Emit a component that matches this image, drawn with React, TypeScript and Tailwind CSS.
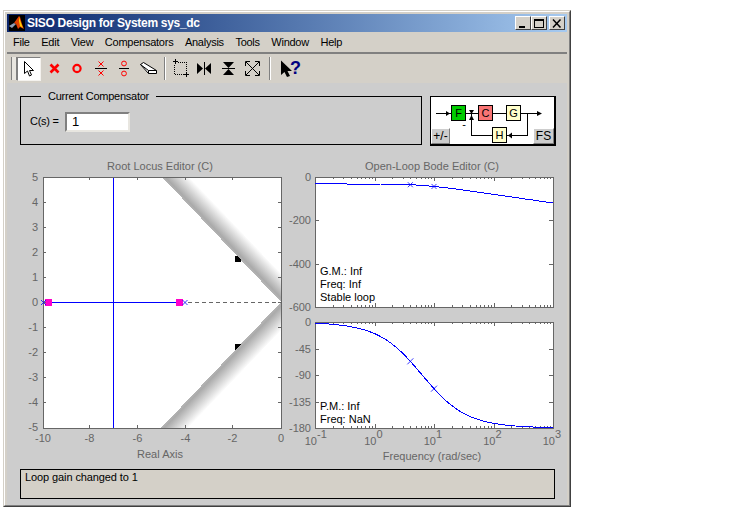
import { ReactNode } from 'react'

const MENU = ['File', 'Edit', 'View', 'Compensators', 'Analysis', 'Tools', 'Window', 'Help']
const AXIS = '#666666'
const TICK_TEXT = 'fill-[#666666] text-[11px]'

// bode data for 1/((s+4)(s+10))
const logX = (w: number) => 315 + (Math.log10(w) + 1) * 59.5
const magY = (w: number) => {
    const db = -20 * Math.log10(Math.sqrt(16 + w * w) * Math.sqrt(100 + w * w))
    return 177 + (-db / 600) * 130
}
const phaseY = (w: number) => {
    const deg = ((Math.atan(w / 4) + Math.atan(w / 10)) * 180) / Math.PI
    return 322 + (deg / 180) * 106
}
const curve = (fn: (w: number) => number) => {
    const pts: string[] = []
    for (let i = 0; i <= 120; i++) {
        const w = Math.pow(10, -1 + (i / 120) * 4)
        pts.push(`${logX(w).toFixed(1)},${fn(w).toFixed(1)}`)
    }
    return pts.join(' ')
}
const minorTicks = () => {
    const out: { x: number; major: boolean }[] = []
    for (let d = -1; d < 3; d++) {
        for (let m = 1; m < 10; m++) {
            out.push({ x: Math.round(logX(m * Math.pow(10, d))) + 0.5, major: m === 1 })
        }
    }
    return out
}

function Cross({ x, y, r = 3 }: { x: number; y: number; r?: number }) {
    return <path d={`M${x - r} ${y - r}L${x + r} ${y + r}M${x + r} ${y - r}L${x - r} ${y + r}`} stroke="#0000ff" strokeWidth="0.8" fill="none" />
}

function RootLocus() {
    const xTicks: [number, string][] = [[43, '-10'], [89.5, '-8'], [137.5, '-6'], [185.5, '-4'], [232.5, '-2'], [281, '0']]
    const yTicks = [5, 4, 3, 2, 1, 0, -1, -2, -3, -4, -5]
    return (
        <svg width="270" height="302" viewBox="20 160 270 302" className="shrink-0 overflow-visible">
            <defs>
                <linearGradient id="upperBand" gradientUnits="userSpaceOnUse" x1="162" y1="177" x2="176.100" y2="163.500">
                    <stop offset="0" stopColor="#b4b4b4" />
                    <stop offset="0.12" stopColor="#aaaaaa" />
                    <stop offset="1" stopColor="#ffffff" />
                </linearGradient>
                <linearGradient id="lowerBand" gradientUnits="userSpaceOnUse" x1="161" y1="428" x2="175.100" y2="441.500">
                    <stop offset="0" stopColor="#b4b4b4" />
                    <stop offset="0.12" stopColor="#aaaaaa" />
                    <stop offset="1" stopColor="#ffffff" />
                </linearGradient>
            </defs>
            <text x="160" y="170" textAnchor="middle" className={TICK_TEXT}>Root Locus Editor (C)</text>
            <rect x="43" y="177" width="238" height="251" fill="#ffffff" />
            <rect x="235" y="256" width="6" height="6" fill="#000000" />
            <rect x="235" y="344" width="6" height="6" fill="#000000" />
            <polygon points="162,177 189,177 281,274 281,302" fill="url(#upperBand)" shapeRendering="crispEdges" />
            <polygon points="161,428 188,428 281,330 281,302" fill="url(#lowerBand)" shapeRendering="crispEdges" />
            <g shapeRendering="crispEdges">
                <path d="M188 302.500H281M281.500 274V330" stroke={AXIS} strokeDasharray="4 3" fill="none" />
                <path d="M113.500 177V428M43 302.500H180" stroke="#0000ff" fill="none" />
                <rect x="45" y="299" width="7" height="7" fill="#ff00cc" />
                <rect x="176" y="299" width="7" height="7" fill="#ff00cc" />
                <rect x="43.500" y="177.500" width="238" height="251" fill="none" stroke={AXIS} />
                {xTicks.slice(1, 5).map(([x]) => (
                    <path key={x} d={`M${Math.floor(x) + 0.5} 177V180M${Math.floor(x) + 0.5} 428V425`} stroke={AXIS} />
                ))}
                {yTicks.slice(1, 10).map(v => (
                    <path key={v} d={`M43 ${302.5 - v * 25}H46M281 ${302.5 - v * 25}H278`} stroke={AXIS} />
                ))}
            </g>
            <Cross x={43.5} y={302.5} r={2.5} />
            <Cross x={185} y={302.5} r={2.5} />
            {yTicks.map(v => (
                <text key={v} x="38" y={306 - v * 25} textAnchor="end" className={TICK_TEXT}>{v}</text>
            ))}
            {xTicks.map(([x, label]) => (
                <text key={label} x={x} y="442" textAnchor="middle" className={TICK_TEXT}>{label}</text>
            ))}
            <text x="160" y="458" textAnchor="middle" className={TICK_TEXT}>Real Axis</text>
        </svg>
    )
}

function BodeAxes({ top, bottom, yTicks }: { top: number; bottom: number; yTicks: string[] }) {
    const step = (bottom - top) / (yTicks.length - 1)
    return (
        <>
            <g shapeRendering="crispEdges">
                <rect x="315.500" y={top + 0.5} width="238" height={bottom - top} fill="none" stroke={AXIS} />
                {minorTicks().map(t => (
                    <path key={t.x} d={`M${t.x} ${top}v${t.major ? 4 : 2}M${t.x} ${bottom}v-${t.major ? 4 : 2}`} stroke={AXIS} />
                ))}
                {yTicks.slice(1, -1).map((_, i) => {
                    const y = Math.round(top + step * (i + 1)) + 0.5
                    return <path key={i} d={`M315 ${y}h4M553 ${y}h-4`} stroke={AXIS} />
                })}
            </g>
            {yTicks.map((label, i) => (
                <text key={label} x="311" y={top + step * i + 4} textAnchor="end" className={TICK_TEXT}>{label}</text>
            ))}
        </>
    )
}

function BodePlots() {
    const decades: [number, string][] = [[315, '-1'], [374.5, '0'], [434, '1'], [493.5, '2'], [553, '3']]
    return (
        <svg width="277" height="302" viewBox="290 160 277 302" className="shrink-0 overflow-visible">
            <text x="432" y="170" textAnchor="middle" className={TICK_TEXT}>Open-Loop Bode Editor (C)</text>
            <rect x="315" y="177" width="238" height="130" fill="#ffffff" />
            <rect x="315" y="322" width="238" height="106" fill="#ffffff" />
            <BodeAxes top={177} bottom={307} yTicks={['0', '-200', '-400', '-600']} />
            <BodeAxes top={322} bottom={428} yTicks={['0', '-45', '-90', '-135', '-180']} />
            <polyline points={curve(magY)} fill="none" stroke="#0000ff" shapeRendering="crispEdges" />
            <polyline points={curve(phaseY)} fill="none" stroke="#0000ff" shapeRendering="crispEdges" />
            <Cross x={logX(4)} y={magY(4)} r={2.5} />
            <Cross x={logX(10)} y={magY(10)} r={2.5} />
            <Cross x={logX(4)} y={phaseY(4)} />
            <Cross x={logX(10)} y={phaseY(10)} />
            <g className="fill-black text-[11px]">
                <text x="320" y="275">G.M.: Inf</text>
                <text x="320" y="288">Freq: Inf</text>
                <text x="320" y="301">Stable loop</text>
                <text x="320" y="410">P.M.: Inf</text>
                <text x="320" y="423">Freq: NaN</text>
            </g>
            {decades.map(([x, exp]) => (
                <g key={exp} className={TICK_TEXT}>
                    <text x={x + 2} y="445" textAnchor="end">10</text>
                    <text x={x + 2} y="438">{exp}</text>
                </g>
            ))}
            <text x="432" y="460" textAnchor="middle" className={TICK_TEXT}>Frequency (rad/sec)</text>
        </svg>
    )
}

function Block({ x, y, fill, label }: { x: number; y: number; fill: string; label: string }) {
    return (
        <g>
            <rect x={x + 0.5} y={y + 0.5} width="14" height="15" fill={fill} stroke="#000000" shapeRendering="crispEdges" />
            <text x={x + 7.5} y={y + 12} textAnchor="middle" className="fill-black text-[11px]">{label}</text>
        </g>
    )
}

function LoopDiagram() {
    return (
        <div className="relative w-[126px] h-[50px] bg-white border border-black border-r-2 border-b-2 shrink-0">
            <svg width="124" height="48" viewBox="431 97 124 48" className="block">
                <g shapeRendering="crispEdges">
                    <path d="M436 113.500H451M465 113.500H478M493 113.500H506M521 113.500H540M471.500 113V135.500H492M507 135.500H527.500V113" stroke="#000000" fill="none" />
                </g>
                <path d="M446 111l4 2.500-4 2.500zM537 111l5 2.500-5 2.500zM508 135.500l4-3v6zM469 120l2.500-5 2.500 5zM469 110h5l-2.500 4z" fill="#000000" />
                <Block x={451} y={105} fill="#00cc00" label="F" />
                <Block x={478} y={105} fill="#f87474" label="C" />
                <Block x={506} y={105} fill="#ffffcc" label="G" />
                <Block x={492} y={127} fill="#ffffcc" label="H" />
                <text x="464" y="128" textAnchor="middle" className="fill-black text-[11px]">-</text>
            </svg>
            <div className="absolute left-0 bottom-0 w-[19px] h-[16px] flex items-center justify-center bg-[#cdcdcd] border border-white border-r-[#808080] border-b-[#808080] text-[12px] leading-none text-black">+/-</div>
            <div className="absolute right-0 bottom-0 w-[21px] h-[16px] flex items-center justify-center bg-[#cdcdcd] border border-white border-r-[#808080] border-b-[#808080] text-[12px] leading-none text-black">FS</div>
        </div>
    )
}

function ToolIcon({ w = 22, className, children }: { w?: number; className?: string; children: ReactNode }) {
    return (
        <svg width={w} height="22" viewBox={`0 0 ${w} 22`} className={`block shrink-0 ${className ?? ''}`}>
            {children}
        </svg>
    )
}

const ToolSep = () => <div className="w-[2px] h-[23px] mx-[5px] shrink-0 bg-[#808080] border-r border-white" />

function Toolbar() {
    return (
        <div className="h-[29px] flex items-center pl-[4px] bg-[#d4d0c8] shrink-0">
            <div className="w-[6px] h-[23px] shrink-0 bg-[#e8e6e0] border-x border-x-[#808080]" />
            <div className="w-[24px] h-[24px] shrink-0 flex items-center justify-center bg-white border border-[#f4f2ee] border-t-[#808080] border-l-[#808080]">
                <svg width="12" height="16" viewBox="0 0 12 16" className="block">
                    <path d="M1.500.5V12.500L4.500 10 6.500 15 8.500 14 6.500 9.500H10.500Z" fill="#ffffff" stroke="#000000" />
                </svg>
            </div>
            <ToolIcon className="ml-[3px]">
                <path d="M6.500 6.500L14.500 14.500M14.500 6.500L6.500 14.500" stroke="#ff0000" strokeWidth="2.600" />
            </ToolIcon>
            <ToolIcon>
                <circle cx="11" cy="10.500" r="3.600" fill="none" stroke="#ff0000" strokeWidth="2.200" />
            </ToolIcon>
            <ToolIcon w={25}>
                <path d="M10.500 3.500l5 5M15.500 3.500l-5 5M10.500 12.500l5 5M15.500 12.500l-5 5" stroke="#ff0000" />
                <path d="M7 10.500H19" stroke="#000000" shapeRendering="crispEdges" />
            </ToolIcon>
            <ToolIcon>
                <circle cx="11" cy="5.500" r="2.400" fill="none" stroke="#ff0000" />
                <circle cx="11" cy="15.500" r="2.400" fill="none" stroke="#ff0000" />
                <path d="M6 10.500H16" stroke="#000000" shapeRendering="crispEdges" />
            </ToolIcon>
            <ToolIcon w={24}>
                <path d="M5.500 6.500L8.500 4.500 21.500 12.500V15.500H13.500Z" fill="#ffffff" stroke="#000000" />
                <path d="M5.500 6.500L13.500 12.500H21.500M13.500 12.500V15.500" fill="none" stroke="#000000" />
            </ToolIcon>
            <ToolSep />
            <ToolIcon w={20} className="-ml-[1px]">
                <g shapeRendering="crispEdges">
                    <path d="M3 3.500H8M5.500 1V6M14 16.500H19M16.500 14V19" stroke="#000000" />
                    <path d="M8 4.500H16.500V14M4.500 7V16.500H14" fill="none" stroke="#000000" strokeDasharray="1 1" />
                </g>
            </ToolIcon>
            <ToolIcon w={24} className="ml-[2px]">
                <path d="M5 5v11l6-5.500zM19 5v11l-6-5.500z" fill="#000000" />
                <path d="M12 4V17" stroke="#000000" strokeWidth="1" shapeRendering="crispEdges" />
            </ToolIcon>
            <ToolIcon w={24}>
                <path d="M7 4h11l-5.500 6zM7 17h11l-5.500-6z" fill="#000000" />
                <path d="M6 10.500H19" stroke="#000000" shapeRendering="crispEdges" />
            </ToolIcon>
            <ToolIcon w={24}>
                <path d="M6 4L19 17M19 4L6 17M5.500 8V3.500H10M15 3.500H19.500V8M5.500 13V17.500H10M15 17.500H19.500V13" fill="none" stroke="#000000" />
            </ToolIcon>
            <ToolSep />
            <ToolIcon w={24} className="ml-[1px]">
                <path d="M4 2.500V17L7.500 14 10 19 13 18 10.500 13H15Z" fill="#000000" />
                <text x="13" y="16" className="fill-[#000080] text-[18px] font-bold">?</text>
            </ToolIcon>
        </div>
    )
}

function MatlabLogo() {
    return (
        <svg width="16" height="16" viewBox="0 0 16 16" className="block">
            <rect width="16" height="16" fill="#000000" />
            <path d="M0 11L5 8 7 9 3 13Z" fill="#8fa0b8" />
            <path d="M5 8L10 1 11 2 13 9 15 14 11 12 9 14 7 9Z" fill="#e04000" />
            <path d="M10 2L12 8 14 13 11 11 10 6Z" fill="#ffd000" />
        </svg>
    )
}

function WinButton({ className, children }: { className?: string; children: ReactNode }) {
    return (
        <div className={`w-[16px] h-[14px] flex items-center justify-center bg-[#d4d0c8] border border-white border-r-[#404040] border-b-[#404040] ${className ?? ''}`}>
            {children}
        </div>
    )
}

export default function App() {
    return (
        <div className="w-[750px] h-[511px] bg-white pt-[10px] pl-[3px] font-['Liberation_Sans',Arial,sans-serif]">
            <div className="w-[568px] h-[497px] border border-[#d4d0c8] border-r-[#404040] border-b-[#404040]">
                <div className="h-full flex flex-col border border-white border-r-[#808080] border-b-[#808080] bg-[#d4d0c8] p-[2px]">
                    {/* title bar */}
                    <div className="h-[18px] shrink-0 flex items-center pl-[2px] pr-[2px] bg-linear-to-r from-[#0a246a] to-[#a6caf0]">
                        <MatlabLogo />
                        <span className="ml-[2px] text-[12px] tracking-[-0.3px] font-bold text-white whitespace-nowrap">SISO Design for System sys_dc</span>
                        <div className="ml-auto flex">
                            <WinButton>
                                <div className="w-[6px] h-[2px] bg-black mt-[7px] -ml-[2px]" />
                            </WinButton>
                            <WinButton>
                                <div className="w-[10px] h-[9px] border border-black border-t-2" />
                            </WinButton>
                            <WinButton className="ml-[2px]">
                                <svg width="10" height="9" viewBox="0 0 10 9" className="block">
                                    <path d="M1 0.500L8.500 8.500M8.500 0.500L1 8.500" stroke="#000000" strokeWidth="1.500" />
                                </svg>
                            </WinButton>
                        </div>
                    </div>
                    {/* menu */}
                    <div className="h-[22px] shrink-0 flex items-center gap-[11.5px] pl-[6px] text-[11px] tracking-[-0.25px] text-black border-b-2 border-b-[#808080]">
                        {MENU.map(item => (
                            <span key={item}>{item}</span>
                        ))}
                    </div>
                    <Toolbar />
                    {/* figure */}
                    <div className="flex-1 bg-[#cdcdcd] pl-[13px] pt-[13px] -mb-[2px] flex flex-col items-start min-h-0">
                        <div className="flex gap-[8px] items-start">
                            <div className="relative w-[402px] h-[49px] border border-black flex items-center pl-[9px] pt-[2px] shrink-0">
                                <span className="absolute left-[20px] -top-[8px] bg-[#cdcdcd] px-[7px] text-[11px] tracking-[-0.25px] leading-[14px] text-black whitespace-nowrap">Current Compensator</span>
                                <span className="w-[35px] text-[11px] tracking-[-0.25px] text-black whitespace-nowrap">C(s) =</span>
                                <div className="w-[65px] h-[20px] bg-white border-2 border-[#e8e6e0] border-t-[#808080] border-l-[#808080] pl-[5px] text-[13px] leading-[16px] text-black">1</div>
                            </div>
                            <LoopDiagram />
                        </div>
                        <div className="flex mt-[14px]">
                            <RootLocus />
                            <BodePlots />
                        </div>
                        <div className="w-[535px] h-[30px] mt-[7px] bg-[#d4d0c8] border border-black pl-[4px] text-[11px] tracking-[-0.1px] leading-[15px] text-black">Loop gain changed to 1</div>
                    </div>
                </div>
            </div>
        </div>
    )
}
